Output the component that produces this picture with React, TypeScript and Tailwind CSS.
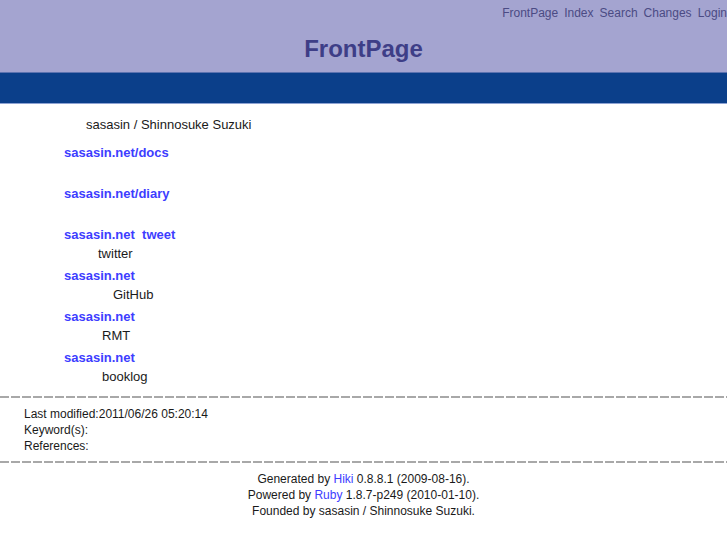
// Hiki FrontPage — sasasin.net

const items: { links: string[]; sub: string; indent: string }[] = [
  { links: ['sasasin.net/docs'], sub: '', indent: 'pl-[34px]' },
  { links: ['sasasin.net/diary'], sub: '', indent: 'pl-[34px]' },
  { links: ['sasasin.net', 'tweet'], sub: 'twitter', indent: 'pl-[34px]' },
  { links: ['sasasin.net'], sub: 'GitHub', indent: 'pl-[49px]' },
  { links: ['sasasin.net'], sub: 'RMT', indent: 'pl-[38px]' },
  { links: ['sasasin.net'], sub: 'booklog', indent: 'pl-[38px]' },
];

const nav = ['FrontPage', 'Index', 'Search', 'Changes', 'Login'];

function Rule() {
  return <div className="h-[2px] w-full bg-[repeating-linear-gradient(90deg,#a8a8a8_0px,#a8a8a8_9px,transparent_9px,transparent_11px)]" />;
}

export default function App() {
  return (
    <div className="min-h-[545px] bg-white text-[#1a1a1a] font-['Liberation_Sans',Arial,sans-serif]">
      <header>
        <div className="h-[72px] bg-[#a4a4d0] flex flex-col">
          <nav className="flex justify-end gap-[6px] pt-[6px] h-[20px] text-[12px] leading-[14px] text-[#4b4b84] whitespace-nowrap">
            {nav.map((n) => (
              <a key={n} href="#">{n}</a>
            ))}
          </nav>
          <h1 className="mt-[15px] text-center text-[24px] leading-[28px] font-bold text-[#3e3e87]">FrontPage</h1>
        </div>
        <div className="h-[32px] bg-[#0b3f8a] border-t border-[#5d73b0] border-b border-b-[#8ea3d3]" />
      </header>

      <main className="pt-[11px] pl-[64px] text-[13px]">
        <p className="pl-[22px] leading-[20px] mb-[8px]">sasasin / Shinnosuke Suzuki</p>
        {items.map((it, i) => (
          <div key={i}>
            <div className="leading-[20px] font-bold text-[#3d3dff] whitespace-pre">
              {it.links.map((l, j) => (
                <span key={j}>
                  {j > 0 && '\u00a0 '}
                  <a href="#">{l}</a>
                </span>
              ))}
            </div>
            <div className={`leading-[17px] h-[21px] ${it.indent}`}>{it.sub}</div>
          </div>
        ))}
      </main>

      <div className="mt-[7px]">
        <Rule />
      </div>
      <div className="pt-[8px] pb-[7px] pl-[24px] text-[12px] leading-[16px]">
        <div>Last modified:2011/06/26 05:20:14</div>
        <div>Keyword(s):</div>
        <div>References:</div>
      </div>
      <Rule />
      <footer className="pt-[8px] text-center text-[12px] leading-[16px]">
        <div>
          Generated by <a href="#" className="text-[#3d3dff]">Hiki</a> 0.8.8.1 (2009-08-16).
        </div>
        <div>
          Powered by <a href="#" className="text-[#3d3dff]">Ruby</a> 1.8.7-p249 (2010-01-10).
        </div>
        <div>Founded by sasasin / Shinnosuke Suzuki.</div>
      </footer>
    </div>
  );
}
